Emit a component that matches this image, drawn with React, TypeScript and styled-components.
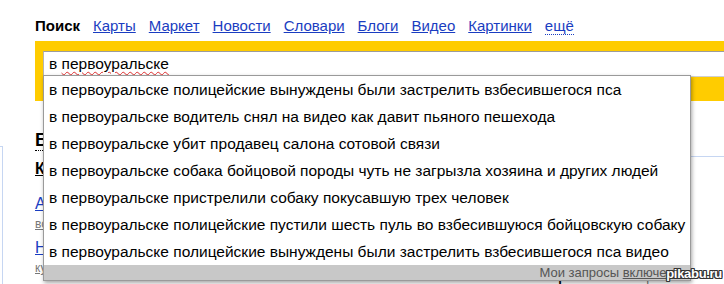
import React from "react";
import styled, { createGlobalStyle } from "styled-components";

const Global = createGlobalStyle`
  html, body { margin: 0; padding: 0; background: #fff; }
  body { font-family: "Liberation Sans", Arial, sans-serif; }
`;

const Page = styled.div`
  position: relative;
  width: 724px;
  height: 284px;
  overflow: hidden;
  background: #fff;
  display: flex;
  flex-direction: column;
`;

const TopStrip = styled.div`
  height: 18px;
  padding-left: 40px;
  font-size: 15px;
  line-height: 17px;
  color: #000;
  overflow: hidden;
`;

const TopText = styled.div`
  margin-top: -17px;
  word-spacing: 6px;
`;

const Nav = styled.nav`
  display: flex;
  align-items: baseline;
  gap: 13px;
  padding-left: 35px;
  height: 18px;
  font-size: 15px;
  line-height: 18px;
`;

const Current = styled.span`
  font-weight: bold;
  color: #000;
`;

const NavLink = styled.a<{ $dotted?: boolean }>`
  color: #1a3dc1;
  text-decoration: ${(p) => (p.$dotted ? "none" : "underline")};
  border-bottom: ${(p) => (p.$dotted ? "1px dotted #1a3dc1" : "none")};
  line-height: 16px;
  cursor: pointer;
`;

const SearchBand = styled.div`
  margin-top: 6px;
  margin-left: 35px;
  height: 65px;
  background: #ffcc00;
  padding: 10px 0 0 8px;
  box-sizing: border-box;
`;

const Input = styled.div`
  height: 26px;
  box-sizing: border-box;
  background: #fff;
  border-top: 1px solid #9c9c9c;
  border-left: 1px solid #b4b4b4;
  border-bottom: 1px solid #d0d0d0;
  padding-left: 5px;
  font-size: 15.5px;
  line-height: 23px;
  color: #000;
  white-space: nowrap;
`;

const Misspelled = styled.span`
  text-decoration: underline wavy #e03030;
  text-decoration-thickness: 1px;
  text-underline-offset: 2px;
`;

const Content = styled.div`
  display: flex;
  flex: 1;
`;

const LeftRail = styled.div`
  width: 2px;
  margin-top: 45px;
  border-top: 1px solid #c6d6f2;
  border-right: 1px solid #c6d6f2;
`;

const LeftCol = styled.div`
  margin-left: 32px;
  display: flex;
  flex-direction: column;
  width: 200px;
`;

const BlockTitle = styled.div`
  margin-top: 29px;
  font-size: 18px;
  font-weight: bold;
  line-height: 20px;
  color: #000;
  align-self: flex-start;
  border-bottom: 1px dotted #000;
`;

const SubTitle = styled.a`
  margin-top: 9px;
  font-size: 16px;
  font-weight: bold;
  line-height: 18px;
  color: #000;
  text-decoration: underline;
`;

const ItemLink = styled.a<{ $gap: number }>`
  margin-top: ${(p) => p.$gap}px;
  font-size: 16px;
  line-height: 18px;
  color: #1a3dc1;
  text-decoration: underline;
`;

const ItemMeta = styled.a`
  margin-top: 4px;
  font-size: 12px;
  line-height: 14px;
  color: #777;
  text-decoration: underline;
`;

const RightPanel = styled.div`
  margin-left: auto;
  width: 254px;
  margin-top: 55px;
  border-top: 1px solid #c6d6f2;
  padding-left: 13px;
  display: flex;
  flex-direction: column;
`;

const TvRow = styled.div`
  margin-top: 112px;
  display: flex;
  gap: 10px;
  font-size: 13px;
  line-height: 15px;
  align-items: center;
`;

const TvTime = styled.span`
  color: #777;
`;

const TvShow = styled.span`
  font-weight: bold;
  color: #000;
`;

const TvIcon = styled.span`
  display: inline-block;
  width: 10px;
  height: 9px;
  background: #e8c040;
  border-radius: 2px;
`;

const Dropdown = styled.div`
  position: absolute;
  left: 43px;
  top: 75px;
  width: 648px;
  box-sizing: border-box;
  background: #fff;
  border: 1px solid #9a9a9a;
  box-shadow: 1px 2px 4px rgba(0, 0, 0, 0.35);
  display: flex;
  flex-direction: column;
`;

const Suggestion = styled.div`
  height: 27px;
  padding-left: 5px;
  font-size: 15.5px;
  line-height: 27px;
  color: #000;
  white-space: nowrap;
`;

const DropFooter = styled.div`
  height: 15px;
  background: #c8c8c8;
  text-align: right;
  padding-right: 7px;
  font-size: 13px;
  line-height: 15px;
  color: #555;
`;

const FooterLink = styled.span`
  text-decoration: underline;
`;

const Watermark = styled.div`
  position: absolute;
  right: 2px;
  bottom: 3px;
  font-size: 13px;
  font-weight: bold;
  line-height: 14px;
  color: #fff;
  letter-spacing: -0.3px;
  text-shadow: 1px 0 0 #333, -1px 0 0 #333, 0 1px 0 #333, 0 -1px 0 #333,
    1px 1px 0 #333, -1px -1px 0 #333, 1px -1px 0 #333, -1px 1px 0 #333;
`;

const navItems = ["Карты", "Маркет", "Новости", "Словари", "Блоги", "Видео", "Картинки"];

const suggestions = [
  "в первоуральске полицейские вынуждены были застрелить взбесившегося пса",
  "в первоуральске водитель снял на видео как давит пьяного пешехода",
  "в первоуральске убит продавец салона сотовой связи",
  "в первоуральске собака бойцовой породы чуть не загрызла хозяина и других людей",
  "в первоуральске пристрелили собаку покусавшую трех человек",
  "в первоуральске полицейские пустили шесть пуль во взбесившуюся бойцовскую собаку",
  "в первоуральске полицейские вынуждены были застрелить взбесившегося пса видео",
];

export default function App() {
  return (
    <>
      <Global />
      <Page>
        <TopStrip>
          <TopText>р у ру</TopText>
        </TopStrip>
        <Nav>
          <Current>Поиск</Current>
          {navItems.map((n) => (
            <NavLink key={n}>{n}</NavLink>
          ))}
          <NavLink $dotted>ещё</NavLink>
        </Nav>
        <SearchBand>
          <Input>
            в <Misspelled>первоуральске</Misspelled>
          </Input>
        </SearchBand>
        <Content>
          <LeftRail />
          <LeftCol>
            <BlockTitle>Блоги</BlockTitle>
            <SubTitle>Курс валют</SubTitle>
            <ItemLink $gap={17}>Авто новости</ItemLink>
            <ItemMeta>все новости</ItemMeta>
            <ItemLink $gap={8}>Новая запись</ItemLink>
            <ItemMeta>куда пойти</ItemMeta>
          </LeftCol>
          <RightPanel>
            <TvRow>
              <TvTime>00:00</TvTime>
              <TvShow>Телепорт</TvShow>
              <TvIcon />
              <TvTime>ТНТ</TvTime>
              <TvTime>Хрен</TvTime>
            </TvRow>
          </RightPanel>
        </Content>
        <Dropdown>
          {suggestions.map((s, i) => (
            <Suggestion key={i}>{s}</Suggestion>
          ))}
          <DropFooter>
            Мои запросы <FooterLink>включены</FooterLink>
          </DropFooter>
        </Dropdown>
        <Watermark>pikabu.ru</Watermark>
      </Page>
    </>
  );
}
